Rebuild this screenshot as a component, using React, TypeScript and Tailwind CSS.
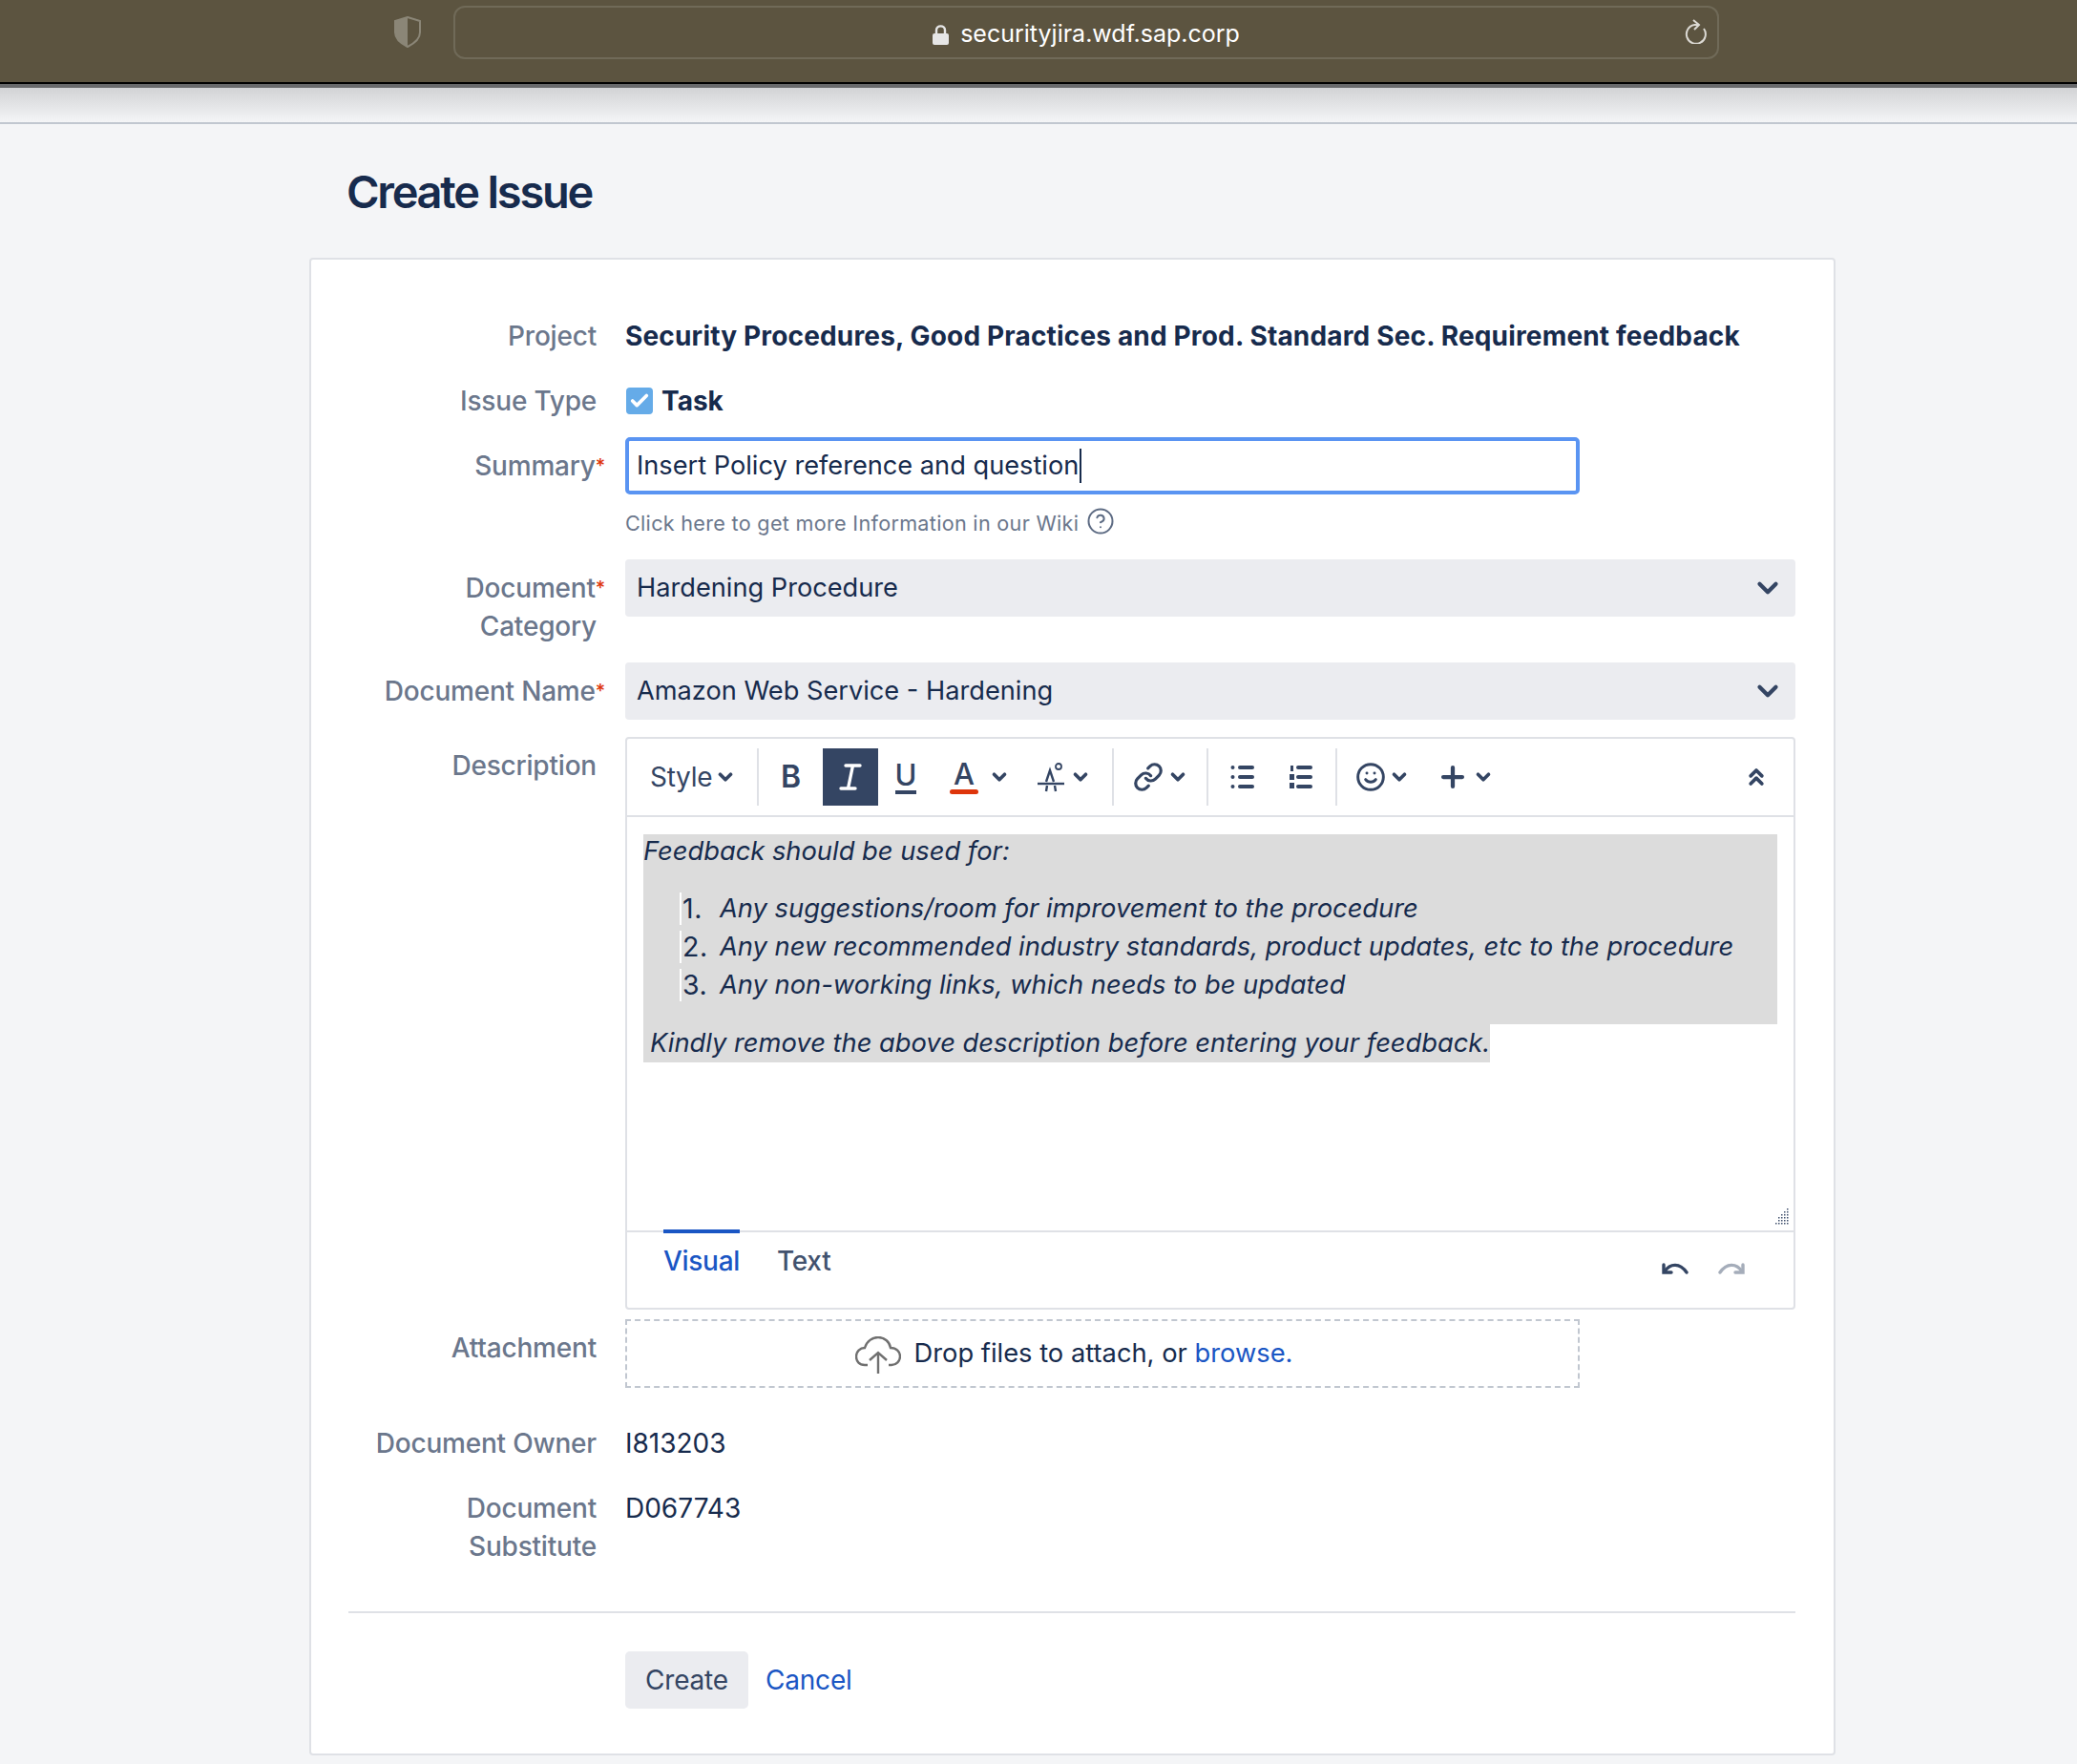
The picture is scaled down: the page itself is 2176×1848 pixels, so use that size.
import { ChevronDown, ChevronsUp, Plus, Smile, Link, CircleHelp, Check } from "lucide-react";

function Label({ children, required }: { children: React.ReactNode; required?: boolean }) {
  return (
    <div className="w-[260px] shrink-0 whitespace-nowrap text-right text-[28px] leading-[40px] font-medium tracking-[-0.2px] text-[#6b778c]">
      {children}
      {required && <span className="-mr-[9px] align-top text-[20px] text-[#de350b]">*</span>}
    </div>
  );
}

function Select({ value }: { value: string }) {
  return (
    <div className="flex h-[60px] w-[1226px] items-center justify-between rounded-[4px] bg-[#ebecf0] pl-[12px] pr-[12px] text-[27.2px] text-[#172b4d]">
      <span>{value}</span>
      <ChevronDown className="h-[34px] w-[34px] text-[#344563]" strokeWidth={3} />
    </div>
  );
}

function Sep() {
  return <div className="h-[60px] w-[2px] shrink-0 bg-[#dfe1e6]" />;
}

function Caret() {
  return <ChevronDown className="h-[22px] w-[22px] shrink-0" strokeWidth={4} />;
}

function ListItem({ n, children }: { n: string; children: React.ReactNode }) {
  return (
    <li className="flex items-center">
      <span className="flex h-[34px] w-[42px] items-center border-l-2 border-white pl-[1px] text-[28.5px] tracking-[0.6px] not-italic">{n}</span>
      {children}
    </li>
  );
}

export default function App() {
  return (
    <div className="h-[1848px] w-[2176px] overflow-hidden bg-[#f4f5f7] font-['Inter',sans-serif] text-[#172b4d]">
      {/* browser bar */}
      <div className="flex h-[86px] items-start bg-[#5c5440] pl-[413px] pt-[6px]">
        <svg className="mt-[11px] h-[33px] w-[28px]" viewBox="0 0 28 33">
          <path d="M14 1 L27 5 V17 C27 24 20 29 14 32 C8 29 1 24 1 17 V5 Z" fill="none" stroke="#8b8677" strokeWidth="2" />
          <path d="M14 1 L1 5 V17 C1 24 8 29 14 32 Z" fill="#8b8677" />
        </svg>
        <div className="relative ml-[34px] flex h-[56px] w-[1326px] items-center justify-center gap-[12px] rounded-[12px] border-2 border-[#706a58] pt-[3px] text-[25px] text-white">
          <svg className="h-[22px] w-[17px]" viewBox="0 0 17 22">
            <path d="M4 11 V6.5 C4 1 13 1 13 6.5 V11" fill="none" stroke="#e6e6e6" strokeWidth="2.4" />
            <rect x="0" y="10" width="17" height="12" rx="2" fill="#e6e6e6" />
          </svg>
          <span className="leading-none">securityjira.wdf.sap.corp</span>
          <svg className="absolute right-[10px] top-[12px] h-[26px] w-[24px]" viewBox="0 0 24 26" fill="none" stroke="#dbd9d3" strokeWidth="2">
            <path d="M10 6 A10 10 0 1 0 20 10" />
            <path d="M10 6 H14 M9 1 L15 6 L10 11" />
          </svg>
        </div>
      </div>
      <div className="h-[2px] bg-black" />
      <div className="h-[4px] bg-[#68696b]" />
      <div className="h-[38px] border-b-2 border-[#c1c7d0] bg-gradient-to-b from-[#d2d3d5] to-[#f4f5f7]" />

      <h1 className="ml-[363px] mt-[39px] text-[47px] leading-[64px] font-semibold tracking-[-2.3px] text-[#172b4d]">Create Issue</h1>

      {/* card */}
      <div className="ml-[324px] mt-[37px] h-[1569px] w-[1599px] rounded-[4px] border-2 border-[#dfe1e6] bg-white pl-[39px] pr-[40px] pt-[60px]">
        <div className="flex gap-[30px]">
          <Label>Project</Label>
          <div className="text-[28px] leading-[40px] font-bold tracking-[0.17px] whitespace-nowrap">Security Procedures, Good Practices and Prod. Standard Sec. Requirement feedback</div>
        </div>

        <div className="mt-[28px] flex gap-[30px]">
          <Label>Issue Type</Label>
          <div className="flex items-center gap-[9px] pl-[1px] text-[28px] leading-[40px] font-bold">
            <span className="flex h-[28px] w-[28px] items-center justify-center rounded-[4px] bg-[#65abe8]">
              <Check className="h-[22px] w-[22px] text-white" strokeWidth={4} />
            </span>
            Task
          </div>
        </div>

        <div className="mt-[18px] flex gap-[30px]">
          <div className="pt-[10px]">
            <Label required>Summary</Label>
          </div>
          <div>
            <div className="flex h-[60px] w-[1000px] items-center rounded-[5px] border-[4px] border-[#5a94f2] pl-[8px] text-[27.2px] text-[#172b4d]">
              Insert Policy reference and question
              <span className="ml-[1px] h-[36px] w-[2px] bg-[#172b4d]" />
            </div>
            <div className="mt-[10px] flex h-[40px] items-center gap-[8px] text-[21.6px] tracking-[0.3px] text-[#6b778c]">
              Click here to get more Information in our Wiki
              <CircleHelp className="-mt-[4px] h-[30px] w-[30px] text-[#5e6c84]" strokeWidth={1.6} />
            </div>
          </div>
        </div>

        <div className="mt-[18px] flex gap-[30px]">
          <div className="pt-[10px]">
            <Label required>Document</Label>
            <Label>Category</Label>
          </div>
          <Select value="Hardening Procedure" />
        </div>

        <div className="mt-[18px] flex gap-[30px]">
          <div className="pt-[10px]">
            <Label required>Document Name</Label>
          </div>
          <Select value="Amazon Web Service - Hardening" />
        </div>

        <div className="mt-[18px] flex gap-[30px]">
          <div className="pt-[10px]">
            <Label>Description</Label>
          </div>
          <div className="h-[600px] w-[1226px] rounded-[4px] border-2 border-[#dfe1e6]">
            {/* toolbar */}
            <div className="flex h-[82px] items-center border-b-2 border-[#dfe1e6] pb-[1px] pr-[25px] text-[#344563]">
              <div className="flex w-[136px] items-center gap-[3px] pl-[24px] text-[28px] tracking-[-0.3px]">
                Style
                <Caret />
              </div>
              <Sep />
              <div className="flex w-[67px] justify-center text-[32px] font-semibold">B</div>
              <div className="flex h-[60px] w-[58px] items-center justify-center bg-[#344563] text-white">
                <svg className="h-[28px] w-[24px]" viewBox="0 0 24 28" fill="none" stroke="currentColor" strokeWidth="3.4" strokeLinecap="round">
                  <path d="M7 2 H22 M2 26 H17 M14.5 2 L9.5 26" />
                </svg>
              </div>
              <div className="flex w-[58px] justify-center text-[31px] font-medium">
                <span className="border-b-[4px] border-[#344563] leading-[33px]">U</span>
              </div>
              <div className="flex w-[90px] items-center">
                <span className="ml-[18px] flex w-[28px] flex-col items-center text-[31px] font-medium leading-[32px]">
                  A<span className="h-[5px] w-[30px] rounded-full bg-[#de350b]" />
                </span>
                <span className="ml-[12px]">
                  <Caret />
                </span>
              </div>
              <div className="flex w-[97px] items-center">
                <svg className="ml-[17px] h-[32px] w-[32px]" viewBox="0 0 32 32" fill="none" stroke="currentColor" strokeWidth="2.4">
                  <path d="M11 21 L15 9 L19 21" />
                  <path d="M2 23 H30" />
                  <path d="M11 31 L12 25 M20 25 L21 31" />
                  <circle cx="24" cy="5" r="3" strokeWidth="1.8" />
                </svg>
                <span className="ml-[4px]">
                  <Caret />
                </span>
              </div>
              <Sep />
              <div className="flex w-[97px] items-center">
                <Link className="ml-[20px] h-[32px] w-[32px]" strokeWidth={2.4} />
                <span className="ml-[4px]">
                  <Caret />
                </span>
              </div>
              <Sep />
              <div className="flex w-[70px] justify-center pl-[1px]">
                <svg className="h-[26px] w-[26px]" viewBox="0 0 26 26" fill="currentColor">
                  <circle cx="2.5" cy="3" r="2" />
                  <circle cx="2.5" cy="13" r="2" />
                  <circle cx="2.5" cy="23" r="2" />
                  <rect x="8" y="1" width="17" height="4" rx="2" />
                  <rect x="8" y="11" width="17" height="4" rx="2" />
                  <rect x="8" y="21" width="17" height="4" rx="2" />
                </svg>
              </div>
              <div className="flex w-[63px] items-start pl-[14px]">
                <svg className="h-[26px] w-[26px]" viewBox="0 0 26 26" fill="currentColor">
                  <rect x="2" y="1" width="3" height="6" />
                  <rect x="1" y="10" width="5" height="6" />
                  <rect x="1" y="19" width="5" height="6" />
                  <rect x="8" y="1" width="17" height="4" rx="2" />
                  <rect x="8" y="11" width="17" height="4" rx="2" />
                  <rect x="8" y="21" width="17" height="4" rx="2" />
                </svg>
              </div>
              <Sep />
              <Smile className="ml-[19px] h-[32px] w-[32px]" strokeWidth={2.2} />
              <span className="ml-[3px]">
                <Caret />
              </span>
              <Plus className="ml-[28px] h-[34px] w-[34px]" strokeWidth={3} />
              <span className="ml-[4px]">
                <Caret />
              </span>
              <ChevronsUp className="ml-auto h-[28px] w-[28px]" strokeWidth={3.2} />
            </div>

            {/* content */}
            <div className="relative h-[433px] pl-[17px] pr-[17px] pt-[18px] text-[27.3px] italic">
              <div className="bg-[#dcdcdc]">
                <p className="h-[36px] leading-[36px]">Feedback should be used for:</p>
                <ol className="mt-[22px] pb-[21px] pl-[38px] leading-[40px]">
                  <ListItem n="1.">Any suggestions/room for improvement to the procedure</ListItem>
                  <ListItem n="2.">Any new recommended industry standards, product updates, etc to the procedure</ListItem>
                  <ListItem n="3.">Any non-working links, which needs to be updated</ListItem>
                </ol>
              </div>
              <span className="inline-block bg-[#dcdcdc] pl-[7px] leading-[40px]">Kindly remove the above description before entering your feedback.</span>
              <svg className="absolute bottom-[5px] right-[4px] h-[20px] w-[20px]" viewBox="0 0 20 20" fill="#42526e">
                {[2, 5, 8, 11, 14, 17].map((y, row) =>
                  [17, 14, 11, 8, 5, 2].slice(0, Math.ceil((row + 1) / 1.3)).map((x) => <rect key={`${x}-${y}`} x={x} y={y} width="1.5" height="1.5" />)
                )}
              </svg>
            </div>

            {/* tabs */}
            <div className="flex h-[81px] items-start border-t-2 border-[#dfe1e6] pl-[38px] pr-[51px] text-[28px] tracking-[-0.3px]">
              <div className="-mt-[3px] border-t-4 border-[#1a56c4] pt-[9px] leading-[40px] font-medium text-[#1a56c4]">Visual</div>
              <div className="-mt-[3px] ml-[39px] pt-[13px] leading-[40px] font-medium text-[#42526e]">Text</div>
              <svg className="ml-auto mt-[32px] h-[12px] w-[28px] text-[#344563]" viewBox="0 0 28 12" fill="none" stroke="currentColor" strokeWidth="3.4" strokeLinecap="round">
                <path d="M2 2 V10 H10" />
                <path d="M3 9 C9 0 19 0 26 10" />
              </svg>
              <svg className="ml-[31px] mt-[32px] h-[12px] w-[28px] text-[#a5adba]" viewBox="0 0 28 12" fill="none" stroke="currentColor" strokeWidth="3.4" strokeLinecap="round">
                <path d="M26 2 V10 H18" />
                <path d="M25 9 C19 0 9 0 2 10" />
              </svg>
            </div>
          </div>
        </div>

        <div className="mt-[10px] flex gap-[30px]">
          <div className="pt-[10px]">
            <Label>Attachment</Label>
          </div>
          <div className="flex h-[72px] w-[1000px] items-center justify-center gap-[14px] border-2 border-dashed border-[#c1c7d0] pr-[60px] pt-[1px] text-[27.3px]">
            <svg className="mt-[2px] h-[40px] w-[48px]" viewBox="0 0 48 40" fill="none" stroke="#707070" strokeWidth="2.4">
              <path d="M13 30 H10 C4 30 1 26 1 21 C1 16 5 12 10 12 C12 5 18 1 24 1 C31 1 36 6 37 12 C43 12 47 16 47 21 C47 26 43 30 38 30 H35" />
              <path d="M24 39 V17 M15 25 L24 17 L33 25" />
            </svg>
            <span>
              Drop files to attach, or <span className="text-[#1a56c4]">browse.</span>
            </span>
          </div>
        </div>

        <div className="mt-[38px] flex gap-[30px]">
          <Label>Document Owner</Label>
          <div className="text-[28px] leading-[40px]">I813203</div>
        </div>

        <div className="mt-[28px] flex gap-[30px]">
          <div>
            <Label>Document</Label>
            <Label>Substitute</Label>
          </div>
          <div className="text-[28px] leading-[40px]">D067743</div>
        </div>

        <div className="mt-[48px] h-[2px] bg-[#dfe1e6]" />

        <div className="mt-[40px] flex items-center pl-[290px] text-[28px] tracking-[-0.2px]">
          <button className="h-[60px] w-[129px] rounded-[5px] bg-[#ebecf0] text-[#344563]">Create</button>
          <a className="ml-[18px] text-[#1a56c4]">Cancel</a>
        </div>
      </div>
    </div>
  );
}
